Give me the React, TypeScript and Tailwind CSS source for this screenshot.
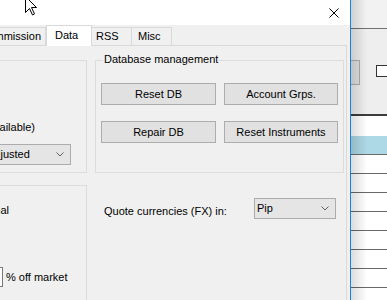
function Chevron() {
  return (
    <svg width="8" height="5" viewBox="0 0 8 5" className="shrink-0">
      <polyline points="0.5,0.5 4,4 7.5,0.5" fill="none" stroke="#606060" strokeWidth="1" />
    </svg>
  );
}

function Combo({ text, className }: { text: string; className: string }) {
  return (
    <div
      className={
        "flex shrink-0 items-center justify-between border border-[#acacac] bg-[#e5e5e5] pr-[6px] leading-[13px] " + className
      }
    >
      <span className="whitespace-nowrap">{text}</span>
      <Chevron />
    </div>
  );
}

function Button({ label, className }: { label: string; className: string }) {
  return (
    <div
      className={
        "flex h-[22px] items-center justify-center border border-[#adadad] bg-[#e1e1e1] leading-[13px] " + className
      }
    >
      {label}
    </div>
  );
}

function Cursor() {
  return (
    <svg width="13" height="20" viewBox="0 0 13 20" className="absolute left-[25px] top-[-4px]">
      <polygon
        points="0.5,0.5 0.5,16.5 4.5,12.5 7.5,19 9.5,18 6.5,11.5 11.5,11.5"
        fill="#fff"
        stroke="#000"
        strokeWidth="1"
      />
    </svg>
  );
}

function MainWindow() {
  return (
    <div className="relative flex w-[351px] shrink-0 flex-col overflow-hidden border-r border-[#1883d7] bg-[#f0f0f0]">
      {/* title bar */}
      <div className="flex h-[25px] shrink-0 items-center justify-end bg-white pr-[11px]">
        <svg width="10" height="10" viewBox="0 0 10 10">
          <path d="M0.5 0.5 L9.5 9.5 M9.5 0.5 L0.5 9.5" stroke="#000" strokeWidth="1" />
        </svg>
      </div>

      {/* tabs */}
      <div className="flex h-[20px] shrink-0 items-end leading-[13px]">
        <div className="ml-[-31px] flex h-[18px] w-[77px] items-center justify-end border-x border-t border-[#d9d9d9] pr-[4px]">
          Commission
        </div>
        <div className="z-10 mb-[-1px] flex h-[21px] w-[46px] items-center border-x border-t border-[#d9d9d9] bg-white pb-[1px] pl-[8px]">
          Data
        </div>
        <div className="flex h-[18px] w-[40px] items-center border-r border-t border-[#d9d9d9] pl-[4px]">RSS</div>
        <div className="flex h-[18px] w-[40px] items-center border-r border-t border-[#d9d9d9] pl-[6px]">Misc</div>
      </div>

      {/* tab page */}
      <div className="mr-[3px] flex shrink-0 flex-col border-r border-t border-[#d9d9d9] pt-[14px]">
        <div className="flex gap-[8px]">
          <div className="ml-[-113px] flex h-[113px] w-[200px] flex-col items-end overflow-hidden border border-[#dcdcdc] pr-[15px] pt-[60px] leading-[13px]">
            <span className="mr-[36px] whitespace-nowrap">Use adjusted data (if available)</span>
            <Combo text="Adjusted" className="mt-[10px] h-[21px] w-[88px] pl-[3px]" />
          </div>
          <div className="relative h-[113px] w-[249px] border border-[#dcdcdc] px-[5px] pt-[22px]">
            <span className="absolute left-[7px] top-[-8px] bg-[#f0f0f0] px-[1px] leading-[13px]">
              Database management
            </span>
            <div className="flex gap-[8px]">
              <Button label="Reset DB" className="w-[115px]" />
              <Button label="Account Grps." className="w-[114px]" />
            </div>
            <div className="mt-[16px] flex gap-[8px]">
              <Button label="Repair DB" className="w-[115px]" />
              <Button label="Reset Instruments" className="w-[114px]" />
            </div>
          </div>
        </div>

        <div className="mt-[12px] flex gap-[8px]">
          <div className="ml-[-113px] flex h-[140px] w-[200px] flex-col border border-[#dcdcdc] pt-[18px] leading-[13px]">
            <div className="flex justify-end pr-[77px]">
              <span className="whitespace-nowrap">Decimal</span>
            </div>
            <div className="mt-[50px] flex items-center">
              <div className="ml-[65px] h-[20px] w-[50px] shrink-0 border border-[#7a7a7a] bg-white" />
              <span className="ml-[3px] whitespace-nowrap">% off market</span>
            </div>
          </div>
          <div className="flex w-[249px] items-start justify-between pl-[9px] pr-[8px] pt-[13px] leading-[13px]">
            <span className="mt-[7px] whitespace-nowrap">Quote currencies (FX) in:</span>
            <Combo text="Pip" className="h-[21px] w-[82px] pl-[2px]" />
          </div>
        </div>
      </div>

      <Cursor />
    </div>
  );
}

function BackWindow() {
  return (
    <div className="relative flex flex-1 flex-col overflow-hidden bg-white">
      <div className="h-[28px] shrink-0 bg-[#f2f2f2]" />
      <div className="h-[1px] shrink-0 bg-[#707070]" />
      <div className="h-[85px] shrink-0 bg-[#eeeeee] pt-[31px]">
        <div className="flex items-start">
          <div className="h-[25px] w-[9px] shrink-0 border border-l-0 border-[#adadad] bg-[#e1e1e1]" />
          <div className="ml-[16px] mt-[5px] h-[12px] w-[14px] shrink-0 border border-[#333] bg-white" />
        </div>
      </div>
      <div className="h-[2px] shrink-0 bg-[#3c3c3c]" />
      <div className="h-[20px] shrink-0" />
      <div className="h-[18px] shrink-0 bg-[#add8e6]" />
      {Array.from({ length: 8 }).map((_, i) => (
        <div key={i} className="h-[19px] shrink-0 border-t border-[#696969]" />
      ))}
      {/* shadow of the dialog in front */}
      <div className="absolute inset-y-0 left-0 w-[16px] bg-gradient-to-r from-[#00000024] to-transparent" />
    </div>
  );
}

export default function App() {
  return (
    <div className="flex h-[300px] w-[387px] overflow-hidden bg-white font-['Liberation_Sans',Arial,sans-serif] text-[11px] text-black">
      <MainWindow />
      <BackWindow />
    </div>
  );
}
